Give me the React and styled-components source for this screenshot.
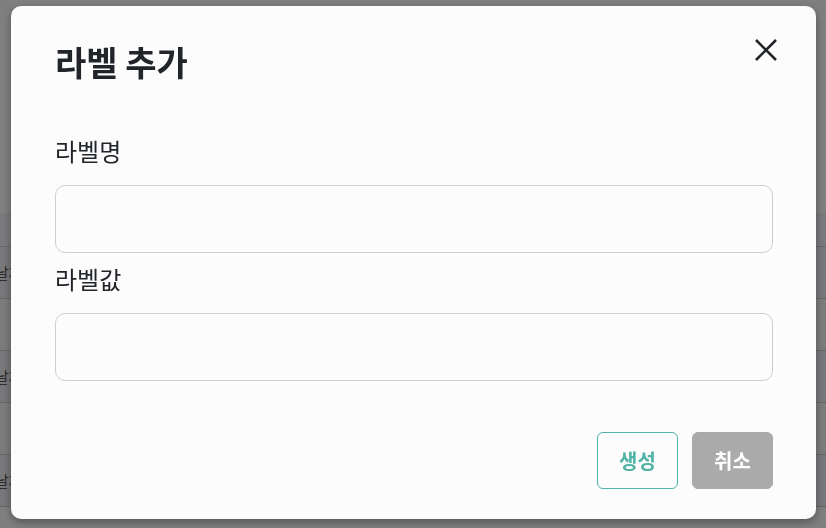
import React from 'react';
import styled, { createGlobalStyle } from 'styled-components';

const GlobalStyle = createGlobalStyle`
  html, body {
    margin: 0;
    padding: 0;
  }
  body {
    font-family: 'Noto Sans CJK KR', 'Noto Sans', sans-serif;
    background: #ffffff;
  }
`;

const rows = [
  { id: 1, name: '날짜', filled: true },
  { id: 2, name: '', filled: false },
  { id: 3, name: '날짜', filled: true },
  { id: 4, name: '', filled: false },
  { id: 5, name: '날짜', filled: true }
];

const LabelModal = () => (
  <>
    <GlobalStyle />
    <Page>
      <TableHead />
      {rows.map(row => (
        <TableRow key={row.id} filled={row.filled}>
          <Cell>{row.name}</Cell>
        </TableRow>
      ))}
    </Page>
    <Backdrop>
      <Modal>
        <Header>
          <Title>라벨 추가</Title>
          <CloseButton aria-label="닫기">
            <svg width="22" height="22" viewBox="0 0 22 22">
              <path
                d="M1 1 L21 21 M21 1 L1 21"
                stroke="#212529"
                strokeWidth="2.6"
                fill="none"
              />
            </svg>
          </CloseButton>
        </Header>
        <Form>
          <Field>
            <FieldLabel>라벨명</FieldLabel>
            <TextInput type="text" />
          </Field>
          <Field>
            <FieldLabel>라벨값</FieldLabel>
            <TextInput type="text" />
          </Field>
        </Form>
        <Footer>
          <ActionButton variant="outline">생성</ActionButton>
          <ActionButton variant="muted">취소</ActionButton>
        </Footer>
      </Modal>
    </Backdrop>
  </>
);

const Page = styled.div`
  height: 528px;
  overflow: hidden;
  padding-top: 213px;
  box-sizing: border-box;
  background: #ffffff;
`;

const TableHead = styled.div`
  height: 33px;
  background: #f4f4f8;
  border-bottom: 1px solid #cfcfd4;
`;

const TableRow = styled.div`
  display: flex;
  align-items: center;
  height: 51px;
  background: ${p => (p.filled ? '#f0f0f6' : '#f8f8f8')};
  border-bottom: 1px solid #cfcfd4;
`;

const Cell = styled.span`
  margin-left: -5px;
  font-size: 15px;
  color: #555;
`;

const Backdrop = styled.div`
  position: fixed;
  inset: 0;
  display: flex;
  justify-content: center;
  align-items: flex-start;
  padding-top: 6px;
  background: rgba(0, 0, 0, 0.5);
`;

const Modal = styled.div`
  width: 805px;
  box-sizing: border-box;
  padding: 32px 43px 30px 44px;
  margin-left: 1px;
  background: #fcfcfd;
  border-radius: 10px;
  box-shadow: 0 3px 8px rgba(0, 0, 0, 0.35);
`;

const Header = styled.div`
  display: flex;
  justify-content: space-between;
  align-items: flex-start;
`;

const Title = styled.h2`
  margin: 0;
  font-size: 34px;
  line-height: 48px;
  font-weight: 700;
  color: #212529;
`;

const CloseButton = styled.button`
  display: flex;
  width: 22px;
  height: 22px;
  margin: 1px -4px 0 0;
  padding: 0;
  border: 0;
  background: none;
  cursor: pointer;
`;

const Form = styled.div`
  margin-top: 48px;
`;

const Field = styled.div`
  & + & {
    margin-top: 9px;
  }
`;

const FieldLabel = styled.label`
  display: block;
  margin-bottom: 17px;
  font-size: 24px;
  line-height: 34px;
  color: #212529;
`;

const TextInput = styled.input`
  display: block;
  width: 100%;
  height: 68px;
  box-sizing: border-box;
  padding: 0 16px;
  border: 1px solid #cfcfcf;
  border-radius: 10px;
  background: #fcfcfd;
  font-family: inherit;
  font-size: 18px;
  outline: none;
`;

const Footer = styled.div`
  display: flex;
  justify-content: flex-end;
  gap: 14px;
  margin-top: 51px;
`;

const ActionButton = styled.button`
  height: 57px;
  min-width: 81px;
  padding: 0 20px;
  border-radius: 6px;
  font-family: inherit;
  font-size: 20px;
  font-weight: 700;
  cursor: pointer;
  border: 1px solid ${p => (p.variant === 'outline' ? '#4fb3a5' : '#aaaaaa')};
  background: ${p => (p.variant === 'outline' ? '#fcfcfd' : '#aaaaaa')};
  color: ${p => (p.variant === 'outline' ? '#4fb3a5' : '#ffffff')};
`;

export default LabelModal;
